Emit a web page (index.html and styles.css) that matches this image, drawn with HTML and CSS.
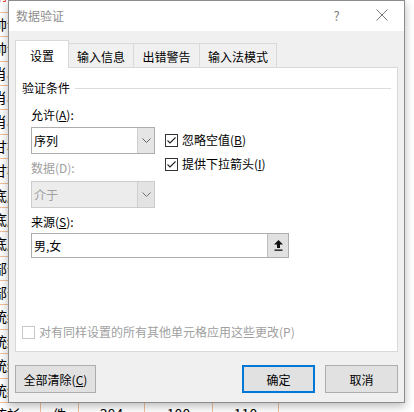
FILE: index.html
```html
<!DOCTYPE html>
<html lang="zh-CN">
<head>
<meta charset="utf-8">
<title>数据验证</title>
<link rel="stylesheet" href="styles.css">
</head>
<body>
<div class="sheet">
  <div class="row"><div class="cell c1 red">销售</div><div class="cell c2"></div><div class="cell c3"></div><div class="cell c4"></div><div class="cell c5"></div><div class="cell c6"></div></div>
  <div class="row"><div class="cell c1">帅气</div><div class="cell c2"></div><div class="cell c3"></div><div class="cell c4"></div><div class="cell c5"></div><div class="cell c6"></div></div>
  <div class="row"><div class="cell c1">帅气</div><div class="cell c2"></div><div class="cell c3"></div><div class="cell c4"></div><div class="cell c5"></div><div class="cell c6"></div></div>
  <div class="row"><div class="cell c1">肖小</div><div class="cell c2"></div><div class="cell c3"></div><div class="cell c4"></div><div class="cell c5"></div><div class="cell c6"></div></div>
  <div class="row"><div class="cell c1">肖小</div><div class="cell c2"></div><div class="cell c3"></div><div class="cell c4"></div><div class="cell c5"></div><div class="cell c6"></div></div>
  <div class="row"><div class="cell c1">肖小</div><div class="cell c2"></div><div class="cell c3"></div><div class="cell c4"></div><div class="cell c5"></div><div class="cell c6"></div></div>
  <div class="row"><div class="cell c1">甘衬</div><div class="cell c2"></div><div class="cell c3"></div><div class="cell c4"></div><div class="cell c5"></div><div class="cell c6"></div></div>
  <div class="row"><div class="cell c1">甘衬</div><div class="cell c2"></div><div class="cell c3"></div><div class="cell c4"></div><div class="cell c5"></div><div class="cell c6"></div></div>
  <div class="row"><div class="cell c1">底底</div><div class="cell c2"></div><div class="cell c3"></div><div class="cell c4"></div><div class="cell c5"></div><div class="cell c6"></div></div>
  <div class="row"><div class="cell c1">底底</div><div class="cell c2"></div><div class="cell c3"></div><div class="cell c4"></div><div class="cell c5"></div><div class="cell c6"></div></div>
  <div class="row"><div class="cell c1">底底</div><div class="cell c2"></div><div class="cell c3"></div><div class="cell c4"></div><div class="cell c5"></div><div class="cell c6"></div></div>
  <div class="row"><div class="cell c1">部部</div><div class="cell c2"></div><div class="cell c3"></div><div class="cell c4"></div><div class="cell c5"></div><div class="cell c6"></div></div>
  <div class="row"><div class="cell c1">部部</div><div class="cell c2"></div><div class="cell c3"></div><div class="cell c4"></div><div class="cell c5"></div><div class="cell c6"></div></div>
  <div class="row"><div class="cell c1">统纺</div><div class="cell c2"></div><div class="cell c3"></div><div class="cell c4"></div><div class="cell c5"></div><div class="cell c6"></div></div>
  <div class="row"><div class="cell c1">统纺</div><div class="cell c2"></div><div class="cell c3"></div><div class="cell c4"></div><div class="cell c5"></div><div class="cell c6"></div></div>
  <div class="row"><div class="cell c1">统纺</div><div class="cell c2"></div><div class="cell c3"></div><div class="cell c4"></div><div class="cell c5"></div><div class="cell c6"></div></div>
  <div class="row"><div class="cell c1">统纺</div><div class="cell c2"></div><div class="cell c3"></div><div class="cell c4"></div><div class="cell c5"></div><div class="cell c6"></div></div>
  <div class="row"><div class="cell c1">统衫</div><div class="cell c2">件</div><div class="cell c3">384</div><div class="cell c4">100</div><div class="cell c5">110</div><div class="cell c6"></div></div>
</div>

<div class="dialog">
  <div class="titlebar">
    <span class="title">数据验证</span>
    <span class="tbtn help">?</span>
    <span class="tbtn close">
      <svg width="12" height="12" viewBox="0 0 12 12"><path d="M0.5 0.5 L11.5 11.5 M11.5 0.5 L0.5 11.5" stroke="#7a7a7a" stroke-width="1" fill="none"/></svg>
    </span>
  </div>
  <div class="body">
    <div class="tabs">
      <div class="tab active">设置</div>
      <div class="tab w2">输入信息</div>
      <div class="tab w3">出错警告</div>
      <div class="tab w4">输入法模式</div>
    </div>
    <div class="panel">
      <div class="group-head"><span>验证条件</span><i class="rule"></i></div>
      <div class="criteria">
        <div class="col-left">
          <div class="label">允许(<u>A</u>):</div>
          <div class="combo">
            <span class="combo-text">序列</span>
            <span class="combo-btn"><svg width="9" height="5" viewBox="0 0 9 5"><path d="M0.5 0.5 L4.5 4.5 L8.5 0.5" stroke="#606060" stroke-width="1" fill="none"/></svg></span>
          </div>
          <div class="label disabled gap6">数据(D):</div>
          <div class="combo off">
            <span class="combo-text">介于</span>
            <span class="combo-btn"><svg width="9" height="5" viewBox="0 0 9 5"><path d="M0.5 0.5 L4.5 4.5 L8.5 0.5" stroke="#707070" stroke-width="1" fill="none"/></svg></span>
          </div>
        </div>
        <div class="col-right">
          <div class="check">
            <span class="box"><svg width="11" height="11" viewBox="0 0 11 11"><path d="M1.5 5.5 L4 8 L9.5 2.5" stroke="#222" stroke-width="1.1" fill="none"/></svg></span>
            <span>忽略空值(<u>B</u>)</span>
          </div>
          <div class="check second">
            <span class="box"><svg width="11" height="11" viewBox="0 0 11 11"><path d="M1.5 5.5 L4 8 L9.5 2.5" stroke="#222" stroke-width="1.1" fill="none"/></svg></span>
            <span>提供下拉箭头(<u>I</u>)</span>
          </div>
        </div>
      </div>
      <div class="label src-label">来源(<u>S</u>):</div>
      <div class="source">
        <span class="source-text">男,女</span>
        <span class="source-btn"><svg width="9" height="11" viewBox="0 0 9 11"><path d="M4.5 0 L9 4.5 L6 4.5 L6 8 L3 8 L3 4.5 L0 4.5 Z" fill="#111"/><rect x="0.5" y="9.5" width="8" height="1.3" fill="#111"/></svg></span>
      </div>
      <div class="check apply">
        <span class="box off"></span>
        <span>对有同样设置的所有其他单元格应用这些更改(P)</span>
      </div>
    </div>
    <div class="buttons">
      <button class="btn clear">全部清除(<u>C</u>)</button>
      <span class="spacer"></span>
      <button class="btn ok">确定</button>
      <button class="btn cancel">取消</button>
    </div>
  </div>
</div>
</body>
</html>
```
FILE: styles.css
```css
* { box-sizing: border-box; }
html, body { margin: 0; padding: 0; }
body {
  width: 414px;
  height: 412px;
  overflow: hidden;
  position: relative;
  background: #fff;
  font-family: "Noto Sans CJK SC", "Microsoft YaHei", sans-serif;
  font-size: 12px;
  color: #000;
}

/* spreadsheet behind the dialog */
.sheet { margin-top: -11.6px; }
.row {
  display: flex;
  height: 24.4px;
  font-size: 14px;
  line-height: 23px;
}
.cell {
  flex: none;
  border-right: 1px solid #f1c09a;
  border-bottom: 1px solid #f1c09a;
  white-space: nowrap;
  overflow: hidden;
  text-align: center;
}
.c1 { width: 41px; text-align: left; text-indent: -7px; }
.c2 { width: 38px; }
.c3 { width: 66px; }
.c4 { width: 68px; }
.c5 { width: 66px; }
.c6 { width: 60px; border-right: none; }
.red { color: #e0301e; line-height: 13px; }

/* dialog */
.dialog {
  position: absolute;
  left: 8px;
  top: 0;
  width: 397px;
  height: 403px;
  border: 1px solid #8c8c8c;
  background: #f0f0f0;
  box-shadow: 0 3px 9px rgba(0, 0, 0, 0.28);
  display: flex;
  flex-direction: column;
}
.titlebar {
  height: 30px;
  background: #fff;
  display: flex;
  align-items: center;
}
.title {
  flex: 1;
  padding-left: 7px;
  padding-bottom: 2px;
  color: #8e8e8e;
  font-size: 12px;
}
.tbtn {
  width: 45px;
  height: 30px;
  display: flex;
  align-items: center;
  justify-content: center;
  color: #808080;
  font-size: 13px;
  padding-bottom: 2px;
}

.body {
  padding: 9px 6px;
  display: flex;
  flex-direction: column;
}

.tabs {
  height: 27px;
  display: flex;
  align-items: flex-end;
}
.tab {
  height: 24px;
  border: 1px solid #d9d9d9;
  border-bottom: none;
  background: #f0f0f0;
  display: flex;
  align-items: center;
  justify-content: center;
  margin-left: -1px;
  padding-top: 1px;
}
.tab.active {
  width: 54px;
  height: 28px;
  margin-left: 0;
  margin-bottom: -1px;
  background: #fff;
  position: relative;
  z-index: 1;
}
.w2 { width: 66px; }
.w3 { width: 67px; }
.w4 { width: 78px; }

.panel {
  height: 285px;
  background: #fff;
  border: 1px solid #d9d9d9;
}
.group-head {
  margin-top: 12px;
  height: 16px;
  display: flex;
  align-items: center;
  padding: 0 6px 0 6px;
  line-height: 16px;
}
.rule {
  flex: 1;
  height: 1px;
  background: #dcdcdc;
  margin-left: 5px;
}

.criteria {
  display: flex;
  margin-top: 11px;
  padding-left: 15px;
}
.col-left { width: 124px; }
.label {
  height: 16px;
  line-height: 16px;
}
.disabled { color: #a0a0a0; }
.gap6 { margin-top: 6px; }

.combo {
  margin-top: 4px;
  height: 27px;
  border: 1px solid #adadad;
  background: #fff;
  display: flex;
}
.combo.off {
  margin-top: 5px;
  background: #ececec;
  border-color: #cccccc;
  color: #a0a0a0;
}
.combo-text {
  flex: 1;
  padding-left: 2px;
  line-height: 25px;
}
.combo-btn {
  width: 17px;
  background: #e5e5e5;
  border-left: 1px solid #cfcfcf;
  display: flex;
  align-items: center;
  justify-content: center;
}
.combo.off .combo-btn { background: #e3e3e3; }

.col-right {
  margin-left: 10px;
  padding-top: 25px;
}
.check {
  height: 16px;
  line-height: 16px;
  display: flex;
  align-items: center;
}
.check.second { margin-top: 8px; }
.box {
  width: 13px;
  height: 13px;
  border: 1px solid #333;
  background: #fff;
  margin-right: 4px;
  display: flex;
  align-items: center;
  justify-content: center;
  flex: none;
}
.box.off { border-color: #c8c8c8; }

.src-label {
  margin-top: 6px;
  padding-left: 15px;
}
.source {
  margin-top: 3px;
  margin-left: 15px;
  width: 258px;
  height: 25px;
  border: 1px solid #adadad;
  display: flex;
}
.source-text {
  flex: 1;
  padding-left: 2px;
  line-height: 23px;
}
.source-btn {
  width: 21px;
  background: #e1e1e1;
  border-left: 1px solid #bdbdbd;
  display: flex;
  align-items: center;
  justify-content: center;
}

.apply {
  margin-top: 66px;
  padding-left: 6px;
  color: #a0a0a0;
}

.buttons {
  margin-top: 13px;
  height: 28px;
  display: flex;
}
.spacer { flex: 1; }
.btn {
  height: 28px;
  border: 1px solid #adadad;
  background: #e1e1e1;
  font-family: inherit;
  font-size: 12px;
  color: #000;
  padding: 0;
  margin: 0;
}
.clear { width: 81px; }
.ok { width: 73px; border: 2px solid #0078d7; }
.cancel { width: 73px; margin-left: 10px; }
u { text-decoration: underline; text-underline-offset: 1px; }
```
